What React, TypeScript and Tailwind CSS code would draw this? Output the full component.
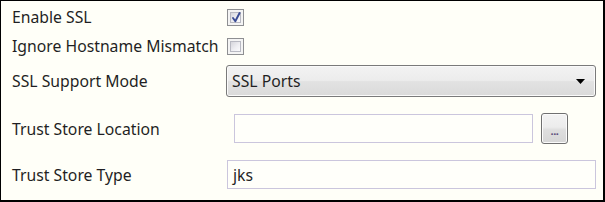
import React from "react";

const font = { fontFamily: '"Noto Sans", "Open Sans", sans-serif' };

function Checkbox({ checked }: { checked?: boolean }) {
  return (
    <div className="w-[17px] h-[17px] border border-[#8e8f92] bg-[#f4f4f4] p-[2px] relative">
      <div className="w-full h-full border border-[#b8b9c2] bg-[linear-gradient(135deg,#d6d6dc_0%,#eeeef2_55%,#fbfbfd_100%)]" />
      {checked && (
        <svg className="absolute left-[2px] top-[1px]" width="12" height="13" viewBox="0 0 12 13">
          <path d="M3 7 L5.3 10.2 L9.6 2" fill="none" stroke="#3a4c94" strokeWidth="1.9" strokeLinecap="round" strokeLinejoin="round" />
        </svg>
      )}
    </div>
  );
}

export default function App() {
  return (
    <div
      style={font}
      className="w-[605px] h-[202px] bg-[#fffff8] border-t border-l border-r-2 border-b-2 border-black text-[15.75px] text-[#1f1f24] pt-[6px] pl-[11px] flex flex-col"
    >
      <div className="flex items-center h-[20px]">
        <div className="w-[215px] leading-[20px]">Enable SSL</div>
        <Checkbox checked />
      </div>
      <div className="flex items-center h-[20px] mt-[9px]">
        <div className="w-[215px] leading-[20px] whitespace-nowrap">Ignore Hostname Mismatch</div>
        <Checkbox />
      </div>
      <div className="flex items-center h-[32px] mt-[9px]">
        <div className="w-[214px] leading-[20px]">SSL Support Mode</div>
        <div className="w-[370px] h-[32px] rounded-[3px] border border-[#7a7a7a] bg-[linear-gradient(#f3f3f3_0%,#ececec_48%,#e2e2e2_52%,#dadada_100%)] flex items-center pl-[5px] pr-[10px] shadow-[inset_0_0_0_1px_#fafafa]">
          <span className="flex-1 leading-[20px]">SSL Ports</span>
          <svg width="9" height="5" viewBox="0 0 9 5">
            <path d="M0 0 H9 L4.5 5 Z" fill="#000" />
          </svg>
        </div>
      </div>
      <div className="flex items-center h-[31px] mt-[16px]">
        <div className="w-[222px] leading-[20px]">Trust Store Location</div>
        <div className="w-[299px] h-[29px] border border-[#cbc6dd] bg-[#fffffa]" />
        <div className="ml-[8px] w-[27px] h-[31px] rounded-[3px] border border-[#707070] bg-[linear-gradient(#f3f3f3_0%,#ececec_45%,#dedede_55%,#d6d6d6_100%)] shadow-[inset_0_0_0_1px_#fbfbfb] flex items-center justify-center">
          <span className="text-[11px] font-bold leading-none text-[#5a4a7a] tracking-[-0.5px] mt-[4px]">...</span>
        </div>
      </div>
      <div className="flex items-center h-[29px] mt-[16px]">
        <div className="w-[215px] leading-[20px]">Trust Store Type</div>
        <div className="w-[369px] h-[29px] border border-[#cbc6dd] bg-[#fffffa] flex items-center pl-[5px]">
          <span className="leading-[20px]">jks</span>
        </div>
      </div>
    </div>
  );
}
